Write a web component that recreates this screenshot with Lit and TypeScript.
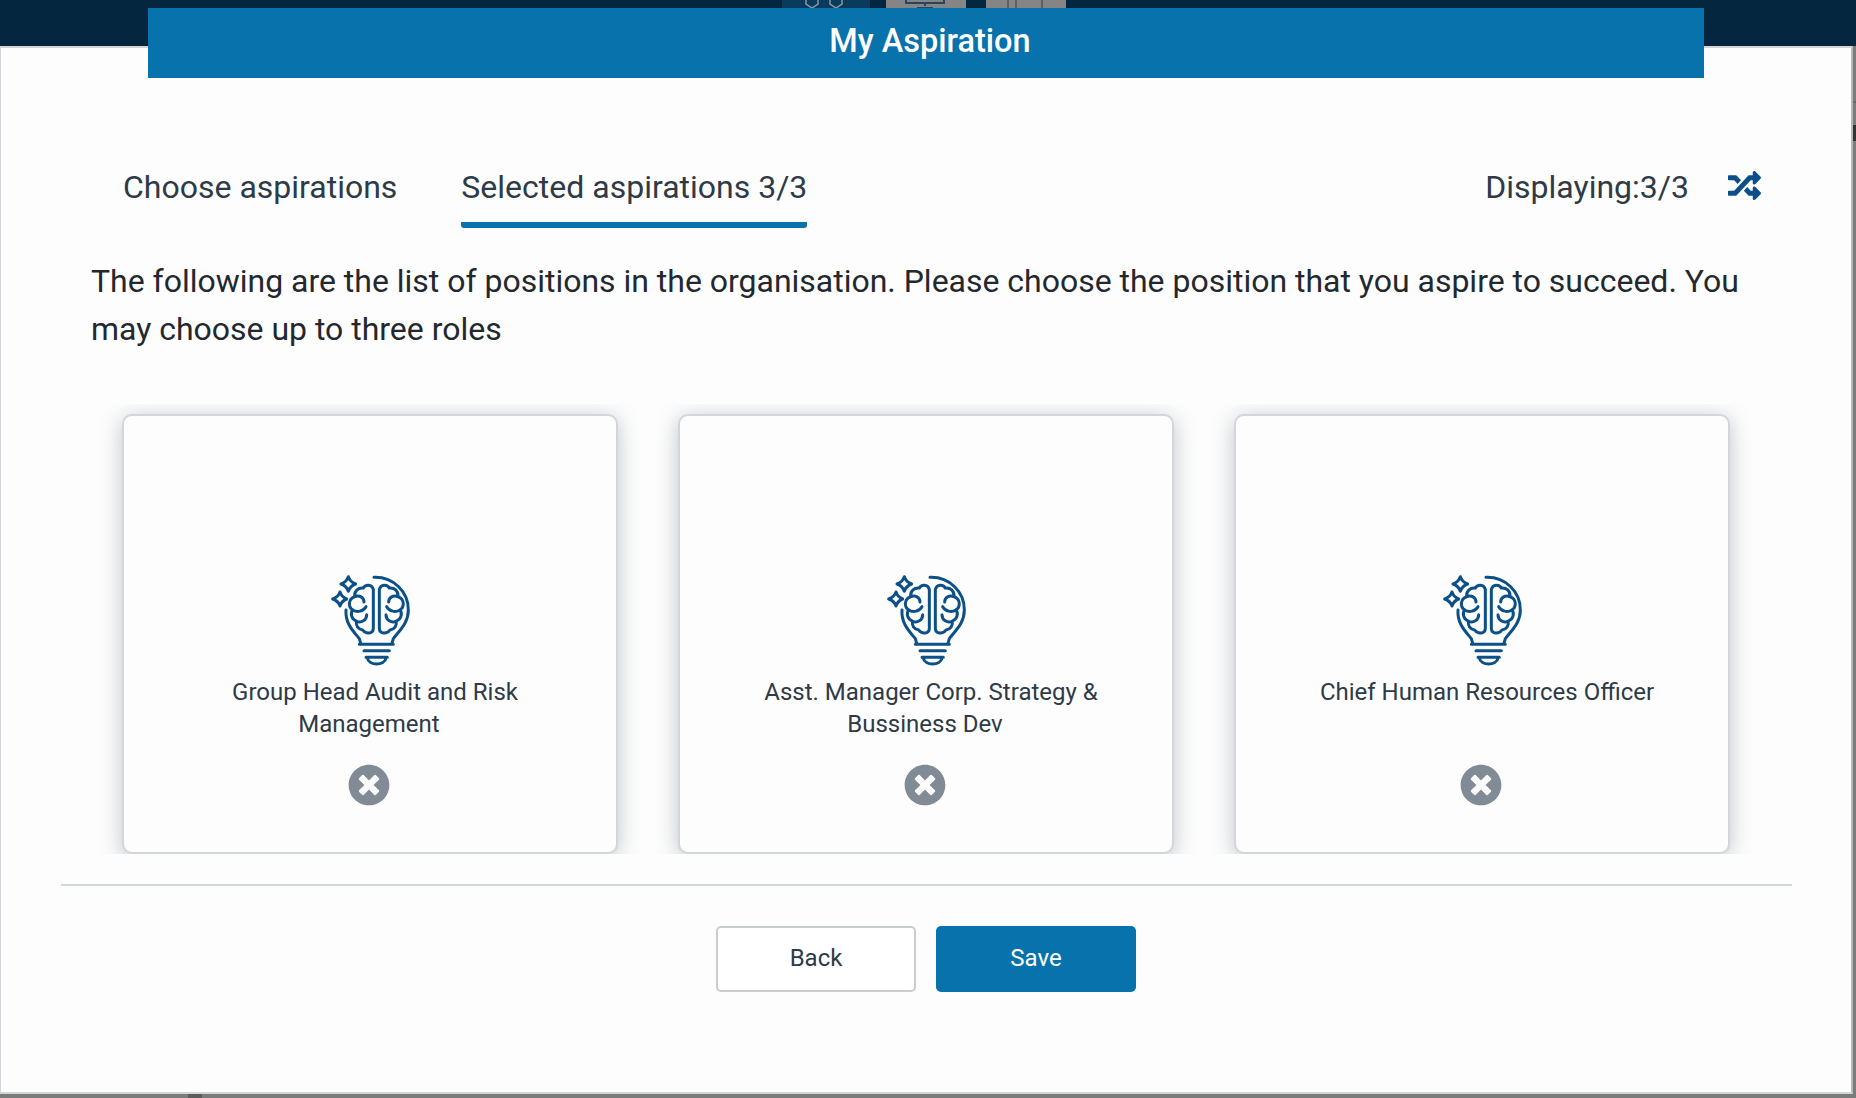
import { LitElement, html, css, svg } from 'lit';
import { customElement, state } from 'lit/decorators.js';

const brainIcon = svg`
  <g fill="none" stroke="currentColor" stroke-width="9" stroke-linecap="round" stroke-linejoin="round">
    <path d="M192 52C250 50 295 95 295 150C295 190 268 212 250 236L246 250" />
    <path d="M108 150C105 190 130 214 148 236L152 250" />
    <path d="M148 253H250M162 272H238M168 292H232M172 294C176 318 224 318 228 294" />
    <path d="M115 50Q120 66 137 72Q120 78 115 94Q110 78 93 72Q110 66 115 50Z" />
    <path d="M90 96Q95 111 110 117Q95 123 90 138Q85 123 68 117Q85 111 90 96Z" />
    <path d="M190 88V205C190 222 168 224 158 210C144 208 136 196 140 184C124 178 120 160 128 150C114 140 114 118 134 110C132 92 146 82 160 84C166 72 186 72 190 88Z" />
    <path d="M134 110C148 104 162 112 162 126M128 150C142 158 160 154 168 140M140 184C154 190 170 180 170 164" />
    <path d="M208 88V205C208 222 230 224 240 210C254 208 262 196 258 184C274 178 278 160 270 150C284 140 284 118 264 110C266 92 252 82 238 84C232 72 212 72 208 88Z" />
    <path d="M264 110C250 104 236 112 236 126M270 150C256 158 238 154 230 140M258 184C244 190 228 180 228 164" />
  </g>`;

const CLOSE_PATH =
  'M256 8C119 8 8 119 8 256s111 248 248 248 248-111 248-248S393 8 256 8zm121.6 313.1c4.7 4.7 4.7 12.3 0 17L338 377.6c-4.7 4.7-12.3 4.7-17 0L256 312l-65.1 65.6c-4.7 4.7-12.3 4.7-17 0L134.4 338c-4.7-4.7-4.7-12.3 0-17l65.6-65-65.6-65.1c-4.7-4.7-4.7-12.3 0-17l39.6-39.6c4.7-4.7 12.3-4.7 17 0l65 65.7 65.1-65.6c4.7-4.7 12.3-4.7 17 0l39.6 39.6c4.7 4.7 4.7 12.3 0 17L312 256l65.6 65.1z';

const SHUFFLE_PATH =
  'M504.971 359.029c9.373 9.373 9.373 24.569 0 33.941l-80 79.984c-15.01 15.01-40.971 4.49-40.971-16.971V416h-58.785a12.004 12.004 0 0 1-8.773-3.812l-70.556-75.596 53.333-57.143L352 336h32v-39.981c0-21.438 25.943-31.998 40.971-16.971l80 79.981zM12 176h84l52.781 56.551 53.333-57.143-70.556-75.596A11.999 11.999 0 0 0 122.785 96H12c-6.627 0-12 5.373-12 12v56c0 6.627 5.373 12 12 12zm372 0v39.984c0 21.46 25.961 31.98 40.971 16.971l80-79.984c9.373-9.373 9.373-24.569 0-33.941l-80-79.981C409.943 24.021 384 34.582 384 56.019V96h-58.785a12.004 12.004 0 0 0-8.773 3.812L96 336H12c-6.627 0-12 5.373-12 12v56c0 6.627 5.373 12 12 12h110.785c3.326 0 6.503-1.381 8.773-3.812L352 176h32z';

@customElement('app-root')
export class AppRoot extends LitElement {
  @state()
  private roles = [
    'Group Head Audit and Risk Management',
    'Asst. Manager Corp. Strategy & Bussiness Dev',
    'Chief Human Resources Officer',
  ];

  static styles = css`
    :host {
      display: block;
      position: relative;
      height: 1098px;
      overflow: hidden;
      background: #7b7b7b;
      font-family: Roboto, 'Liberation Sans', sans-serif;
    }

    .topbar {
      height: 46px;
      background: #05263f;
      display: flex;
      padding-left: 782px;
      gap: 20px;
    }

    .topbar-item {
      width: 80px;
      height: 8px;
      background: #858585;
      display: block;
    }

    .topbar-item.active {
      width: 88px;
      margin-right: -4px;
      background: #0a3a5c;
    }

    .modal {
      width: 1853px;
      height: 1048px;
      box-sizing: border-box;
      background: #fdfdfd;
      border: solid #d2d6da;
      border-width: 2px 2px 2px 1px;
      border-top-color: #d4d4d4;
      border-right-color: #b4b6b8;
    }

    .modal-header {
      margin: -40px 0 0 147px;
      width: 1556px;
      height: 70px;
      box-sizing: border-box;
      padding: 0 0 4px 8px;
      background: #0872ad;
      color: #fff;
      font-size: 32.5px;
      font-weight: 500;
      display: flex;
      align-items: center;
      justify-content: center;
      position: relative;
    }

    .tabs {
      display: flex;
      align-items: flex-start;
      margin-top: 90px;
      padding: 0 90px 0 122px;
      height: 64px;
      color: #2e3a46;
      font-size: 32px;
      line-height: 38px;
    }

    .tab {
      height: 54px;
      margin-right: 64px;
    }

    .tab.active {
      border-bottom: 6px solid #0872ad;
      border-radius: 3px;
    }

    .displaying {
      margin-left: auto;
      display: flex;
      align-items: flex-start;
      gap: 39px;
    }

    .displaying svg {
      width: 33px;
      height: 33px;
      fill: #0b4f8a;
      margin-top: 1px;
    }

    .intro {
      margin: 25px 60px 0 90px;
      font-size: 31.98px;
      line-height: 48px;
      color: #22282e;
    }

    .cards {
      display: grid;
      grid-template-columns: repeat(3, 496px);
      gap: 60px;
      overflow: hidden;
      padding: 10px 40px 0;
      margin: 51px 40px 0 81px;
    }

    .card {
      height: 440px;
      box-sizing: border-box;
      background: #fdfdfd;
      border: 2px solid #d2d6da;
      border-radius: 10px;
      box-shadow: 0 4px 22px rgba(60, 75, 90, 0.32);
      display: flex;
      flex-direction: column;
      align-items: center;
      padding-top: 144px;
      color: #2e3a46;
      font-size: 24px;
      line-height: 32px;
      text-align: center;
    }

    .brain {
      width: 120px;
      height: 120px;
      color: #0d5088;
      margin-bottom: -4px;
      flex: none;
    }

    .name {
      width: 360px;
      height: 64px;
      margin-right: 2px;
      text-indent: 12px;
    }

    .remove {
      width: 42px;
      height: 42px;
      fill: #808b96;
      margin: 24px 2px 0 0;
    }

    hr {
      margin: 30px 59px 0 60px;
      border: none;
      border-top: 2px solid #d2d6da;
    }

    .actions {
      display: flex;
      justify-content: center;
      gap: 20px;
      margin: 40px 0 0;
    }

    button {
      width: 200px;
      height: 66px;
      box-sizing: border-box;
      padding-bottom: 3px;
      border-radius: 5px;
      font: inherit;
      font-size: 24px;
    }

    .back {
      background: #fff;
      border: 2px solid #c9ccd1;
      color: #2e3a46;
    }

    .save {
      background: #0872ad;
      border: none;
      color: #fff;
    }

    /* bits of the page behind the modal that peek out at the edges */
    .peek {
      position: absolute;
      background: #4a4a4a;
    }

    .peek.line {
      left: 1853px;
      top: 101px;
      width: 3px;
      height: 2px;
      background: #6a6a6a;
    }

    .peek.glyph {
      left: 1853px;
      top: 125px;
      width: 3px;
      height: 16px;
      background: #333;
    }

    .peek.foot {
      left: 188px;
      top: 1094px;
      width: 14px;
      height: 4px;
      background: #5c5c5c;
    }
  `;

  render() {
    return html`
      <div class="topbar">
        <svg class="topbar-item active" viewBox="0 0 88 8">
          <path d="M24 0v4l6 4 6-4V0M48 0v4l6 4 6-4V0" fill="none" stroke="#8a9aa6" stroke-width="1.5"></path>
        </svg>
        <svg class="topbar-item" viewBox="0 0 80 8">
          <path d="M20 0v3h38V0M39 3v3M31 8h16" fill="none" stroke="#27455e" stroke-width="2"></path>
        </svg>
        <svg class="topbar-item" viewBox="0 0 80 8">
          <path d="M22 0v8M30 0v8M56 0v8" fill="none" stroke="#4c5660" stroke-width="1.5"></path>
        </svg>
      </div>
      <div class="modal">
        <div class="modal-header">My Aspiration</div>
        <div class="tabs">
          <div class="tab">Choose aspirations</div>
          <div class="tab active">Selected aspirations 3/3</div>
          <div class="displaying">
            <span>Displaying:3/3</span>
            <svg viewBox="0 0 512 512"><path d=${SHUFFLE_PATH}></path></svg>
          </div>
        </div>
        <p class="intro">
          The following are the list of positions in the organisation. Please choose the position that you aspire to
          succeed. You may choose up to three roles
        </p>
        <div class="cards">
          ${this.roles.map(
            (role) => html`
              <div class="card">
                <svg class="brain" viewBox="0 0 360 360">${brainIcon}</svg>
                <div class="name">${role}</div>
                <svg class="remove" viewBox="0 0 512 512"><path d=${CLOSE_PATH}></path></svg>
              </div>
            `,
          )}
        </div>
        <hr />
        <div class="actions">
          <button class="back">Back</button>
          <button class="save">Save</button>
        </div>
      </div>
      <div class="peek line"></div>
      <div class="peek glyph"></div>
      <div class="peek foot"></div>
    `;
  }
}

declare global {
  interface HTMLElementTagNameMap {
    'app-root': AppRoot;
  }
}
